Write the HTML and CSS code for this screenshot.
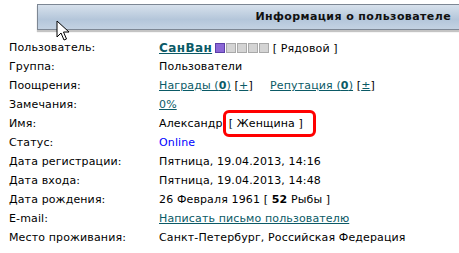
FILE: index.html
```html
<!DOCTYPE html>
<html lang="ru">
<head>
  <meta charset="UTF-8">
  <title>Информация о пользователе</title>
  <link rel="stylesheet" href="styles.css">
</head>
<body>
  <div class="panel-head">Информация о пользователе</div>

  <div class="info">
    <div class="label">Пользователь:</div>
    <div class="value">
      <a href="#" class="nick">СанВан</a><span class="rank"><i class="on"></i><i></i><i></i><i></i><i></i></span>
      [ Рядовой ]
    </div>

    <div class="label">Группа:</div>
    <div class="value">Пользователи</div>

    <div class="label">Поощрения:</div>
    <div class="value">
      <a href="#">Награды (<b>0</b>)</a> [<a href="#">+</a>]
      <span class="gap"></span>
      <a href="#">Репутация (<b>0</b>)</a> [<a href="#">±</a>]
    </div>

    <div class="label">Замечания:</div>
    <div class="value"><a href="#">0%</a></div>

    <div class="label">Имя:</div>
    <div class="value">Александр<span class="marked">[ Женщина ]</span></div>

    <div class="label">Статус:</div>
    <div class="value online">Online</div>

    <div class="label">Дата регистрации:</div>
    <div class="value">Пятница, 19.04.2013, 14:16</div>

    <div class="label">Дата входа:</div>
    <div class="value">Пятница, 19.04.2013, 14:48</div>

    <div class="label">Дата рождения:</div>
    <div class="value">26 Февраля 1961 [ <b>52</b> Рыбы ]</div>

    <div class="label">E-mail:</div>
    <div class="value"><a href="#">Написать письмо пользователю</a></div>

    <div class="label">Место проживания:</div>
    <div class="value">Санкт-Петербург, Российская Федерация</div>
  </div>

  <!-- mouse pointer -->
  <svg class="cursor" width="14" height="22" viewBox="0 0 14 22">
    <path d="M1 1 L1 17 L5 13 L8 20 L10.5 19 L7.5 12 L13 12 Z" fill="#fff" stroke="#000" stroke-width="1"/>
  </svg>
</body>
</html>
```

FILE: styles.css
```css
body {
  margin: 0;
  background: #fff;
  font-family: "DejaVu Sans", Verdana, sans-serif;
  font-size: 11px;
  letter-spacing: 0.13px;
  color: #000;
  overflow: hidden;
  position: relative;
}

.panel-head {
  margin: 4px -10px 0 37px;
  height: 24px;
  line-height: 24px;
  border: 1px solid #7d8794;
  background: linear-gradient(#d7e1ec, #b4c6da 60%, #c3d2e2);
  box-shadow: 0 2px 1px #c4c4c4;
  text-align: right;
  padding-right: 17px;
  font-weight: bold;
  letter-spacing: 0.4px;
  color: #111;
}

.info {
  display: grid;
  grid-template-columns: 150px auto;
  grid-auto-rows: 19px;
  align-items: center;
  margin: 8px 0 0 9px;
}

.info a {
  color: #0b5a66;
}

.nick {
  font-weight: bold;
  font-size: 12px;
  letter-spacing: 0.4px;
}

.rank {
  display: inline-flex;
  gap: 1px;
  vertical-align: -1px;
  margin-left: 3px;
}

.rank i {
  width: 8px;
  height: 8px;
  border: 1px solid #a9a9a9;
  background: #d4d4d4;
}

.rank i.on {
  border-color: #5b3ea8;
  background: #8b67d6;
}

.gap {
  display: inline-block;
  width: 10px;
}

.marked {
  display: inline-block;
  padding: 4px 10px 4px 3px;
  border: 3px solid #f00;
  border-radius: 6px;
  line-height: 13px;
}

.online {
  color: #0000ff;
}

.cursor {
  position: absolute;
  left: 56px;
  top: 20px;
}
```
